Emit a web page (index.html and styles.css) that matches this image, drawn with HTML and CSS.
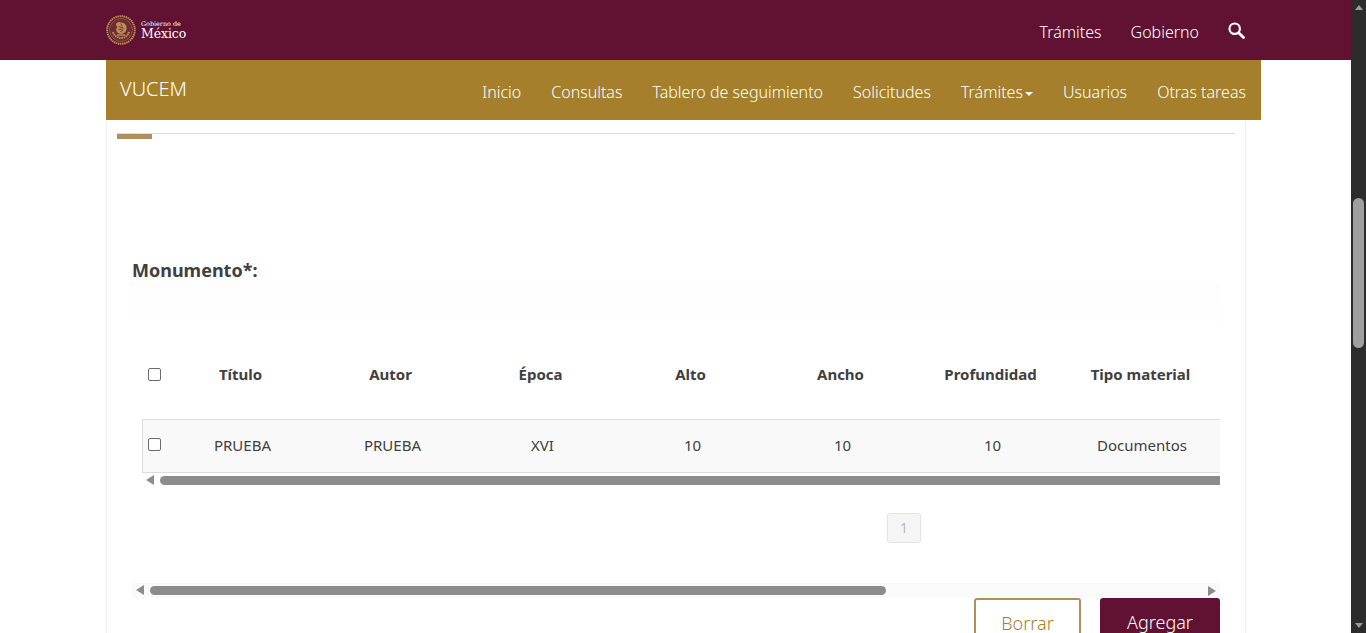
FILE: index.html
```html
<!DOCTYPE html>
<html lang="es">
<head>
<meta charset="utf-8">
<title>VUCEM</title>
<link rel="stylesheet" href="styles.css">
</head>
<body>
<div class="app">
  <div class="page">
    <header class="topbar">
      <a class="logo">
        <svg class="seal" viewBox="0 0 30 30" width="30" height="30" aria-hidden="true">
          <circle cx="15" cy="15" r="13.800" fill="none" stroke="#b88f55" stroke-width="2" stroke-dasharray="1.500 .6"/>
          <circle cx="15" cy="15" r="11.500" fill="#6f2a33" stroke="#a77b49" stroke-width=".6"/>
          <path d="M7 17c1 3.500 4 6 8 6s7-2.500 8-6" fill="none" stroke="#b88f55" stroke-width="2" stroke-dasharray="1.500 .7"/>
          <path d="M10 8.500c1.500-1.500 3.500-2 5-1 2.500-.2 5 1.500 5.500 4.500.5 3-1 5.500-3.500 6.500-2.500.8-5 .2-6.200-1.800-1.100-1.900-.6-3.700.6-4.700-1-.9-1.600-2.200-1.400-3.500z" fill="#b88f55"/>
          <path d="M12.500 11.500l5 1.500M12.500 14.500l5-.5M14 16.500l3-1M15 8.500l1 3" stroke="#6f2a33" stroke-width=".8"/>
          <path d="M11 20h8" stroke="#c9a264" stroke-width="1.200"/>
        </svg>
        <span class="logo-text"><span class="logo-small">Gobierno de</span><span class="logo-big">México</span></span>
      </a>
      <nav class="topnav">
        <a>Trámites</a>
        <a>Gobierno</a>
        <svg class="search" viewBox="0 0 17 17" width="17" height="17" aria-hidden="true">
          <circle cx="6.700" cy="6.700" r="5.200" fill="none" stroke="#fff" stroke-width="2.200"/>
          <path d="M10.700 10.700l4.800 4.800" stroke="#fff" stroke-width="2.800" stroke-linecap="round"/>
        </svg>
      </nav>
    </header>

    <div class="subbar">
      <span class="brand">VUCEM</span>
      <nav class="subnav">
        <a>Inicio</a>
        <a>Consultas</a>
        <a>Tablero de seguimiento</a>
        <a>Solicitudes</a>
        <a>Trámites<i class="caret"></i></a>
        <a>Usuarios</a>
        <a>Otras tareas</a>
      </nav>
    </div>

    <main class="card">
      <div class="rule"><span class="rule-tab"></span></div>
      <h2 class="section-title">Monumento*:</h2>
      <div class="outer">
        <div class="inner">
          <table class="grid">
            <colgroup>
              <col class="col-check"><col class="col-data"><col class="col-data"><col class="col-data"><col class="col-data"><col class="col-data"><col class="col-data"><col class="col-data">
            </colgroup>
            <thead>
              <tr>
                <th class="check"><span class="box"></span></th>
                <th>Título</th><th>Autor</th><th>Época</th><th>Alto</th><th>Ancho</th><th>Profundidad</th><th>Tipo material</th>
              </tr>
            </thead>
            <tbody>
              <tr>
                <td class="check"><span class="box"></span></td>
                <td>PRUEBA</td><td>PRUEBA</td><td>XVI</td><td>10</td><td>10</td><td>10</td><td>Documentos</td>
              </tr>
            </tbody>
          </table>
          <div class="hscroll inner-scroll">
            <i class="arrow-left"></i>
            <span class="thumb thumb-full"></span>
          </div>
          <div class="pager"><span class="page-num">1</span></div>
        </div>
        <div class="hscroll outer-scroll">
          <i class="arrow-left"></i>
          <span class="thumb thumb-part"></span>
          <i class="arrow-right"></i>
        </div>
        <div class="actions">
          <button class="btn btn-ghost">Borrar</button>
          <button class="btn btn-solid">Agregar</button>
        </div>
      </div>
    </main>
  </div>

  <aside class="vscroll">
    <i class="v-up"></i>
    <span class="v-track"><span class="v-thumb"></span></span>
    <i class="v-down"></i>
  </aside>
</div>
</body>
</html>
```
FILE: styles.css
```css
* { box-sizing: border-box; }
html, body { margin: 0; height: 633px; overflow: hidden; }
body { background: #fff; color: #404041; font-family: "Noto Sans", "Open Sans", sans-serif; font-size: 14px; }

.app { display: flex; height: 633px; overflow: hidden; }
.page { flex: 0 0 1351px; width: 1351px; height: 633px; overflow: hidden; }

.topbar { height: 60px; background: #611232; display: flex; align-items: center; justify-content: space-between; padding: 0 106px; color: #fff; }
.logo { display: flex; align-items: center; gap: 5px; margin-top: -1px; }
.seal { display: block; }
.logo-text { display: flex; flex-direction: column; color: #fff; font-family: "DejaVu Serif", "Liberation Serif", serif; line-height: 1; margin-top: 1px; }
.logo-small { font-size: 6.400px; line-height: 8px; }
.logo-big { font-size: 12.500px; line-height: 12px; letter-spacing: -.1px; }
.topnav { display: flex; align-items: center; gap: 29px; font-size: 16px; font-weight: 300; margin-top: 3px; }
.search { margin-top: -3px; }

.subbar { width: 1155px; height: 60px; margin-left: 106px; background: #a57f2c; color: #fff; display: flex; justify-content: space-between; padding: 0 15px 0 14px; }
.brand { font-size: 20px; font-weight: 300; line-height: 58px; }
.subnav { display: flex; gap: 30px; font-size: 16px; font-weight: 300; line-height: 64px; }
.caret { display: inline-block; width: 0; height: 0; margin-left: 2px; vertical-align: middle; border-top: 4px solid #fff; border-left: 4px solid transparent; border-right: 4px solid transparent; }

.card { width: 1140px; height: 513px; margin-left: 106px; border: 1px solid #eee; border-width: 0 1px; padding: 13px 10px 0; overflow: hidden; }
.rule { height: 1px; background: #ddd; position: relative; }
.rule-tab { display: block; position: absolute; left: 0; top: 1px; width: 35px; height: 5px; background: #b38e5d; }
.section-title { margin: 124px 0 0 15px; font-size: 18px; line-height: 24px; font-weight: 700; color: #404041; }

.outer { width: 1092px; margin: 1px 0 0 11px; background: linear-gradient(#fdfdfd, #fff 50px); padding-top: 47px; }
.inner { margin-left: 14px; width: 1078px; overflow: hidden; }

.grid { width: 1078px; table-layout: fixed; border-collapse: collapse; }
.col-check { width: 24px; }
.col-data { width: 150px; }
.col-data:last-child { width: 154px; }
.grid th { height: 89px; text-align: center; font-size: 15px; font-weight: 700; color: #404041; padding: 0 2px 0 0; border-bottom: 1px solid #ddd; }
.grid th:last-child { padding-right: 6px; }
.grid td { height: 53px; text-align: center; font-size: 15px; padding: 0 0 2px 2px; color: #404041; background: #f9f9f9; border-bottom: 1px solid #ddd; }
.grid td:last-child { padding: 0 3px 2px 0; }
.grid td:first-child { border-left: 1px solid #ddd; padding-left: 0; }
.grid .check { padding: 0; }
.box { display: block; width: 13px; height: 13px; margin-left: 5px; border: 1px solid #6b6b6b; border-radius: 2px; background: #fff; }
td.check .box { margin-left: 5px; margin-top: -3px; }

.hscroll { height: 15px; display: flex; align-items: center; position: relative; }
.thumb { display: block; height: 9px; border-radius: 5px 0 0 5px; background: #8c8c8c; }
.arrow-left { width: 0; height: 0; border-top: 5px solid transparent; border-bottom: 5px solid transparent; border-right: 8px solid #8c8c8c; }
.arrow-right { width: 0; height: 0; border-top: 5px solid transparent; border-bottom: 5px solid transparent; border-left: 8px solid #8c8c8c; position: absolute; right: 4px; top: 3px; }

.inner-scroll { height: 12px; padding-left: 4px; align-items: flex-end; }
.thumb-full { flex: 1; margin-left: 6px; }
.pager { display: flex; justify-content: flex-start; padding: 28px 0 0 745px; height: 98px; }
.page-num { width: 34px; height: 30px; border: 1px solid #e3e3e3; border-radius: 3px; background: #f5f5f5; color: #b9b9b9; text-align: center; line-height: 28px; font-size: 14px; }

.outer-scroll { background: #fafafa; margin-left: 4px; padding-left: 4px; }
.thumb-part { width: 736px; margin-left: 6px; border-radius: 5px; }

.actions { display: flex; justify-content: flex-end; gap: 19px; }
.btn { width: 107px; height: 50px; border-radius: 3px; font-family: inherit; font-size: 18px; font-weight: 300; line-height: 46px; padding: 0 0 2px; }
.btn-ghost { background: #fff; border: 2px solid #b38e5d; color: #a57f2c; }
.btn-solid { width: 120px; background: #611232; border: 0; color: #fff; }

.vscroll { flex: 0 0 15px; width: 15px; height: 633px; background: #2c2c2c; display: flex; flex-direction: column; align-items: center; }
.v-up { flex: none; margin-top: 5px; width: 0; height: 0; border-left: 4.500px solid transparent; border-right: 4.500px solid transparent; border-bottom: 5px solid #9c9c9c; }
.v-track { flex: 1; width: 100%; padding-top: 188px; }
.v-thumb { display: block; width: 11px; height: 150px; margin-left: 2px; border-radius: 6px; background: #9f9f9f; }
.v-down { flex: none; margin-bottom: 5px; width: 0; height: 0; border-left: 4.500px solid transparent; border-right: 4.500px solid transparent; border-top: 5px solid #9c9c9c; }
```
